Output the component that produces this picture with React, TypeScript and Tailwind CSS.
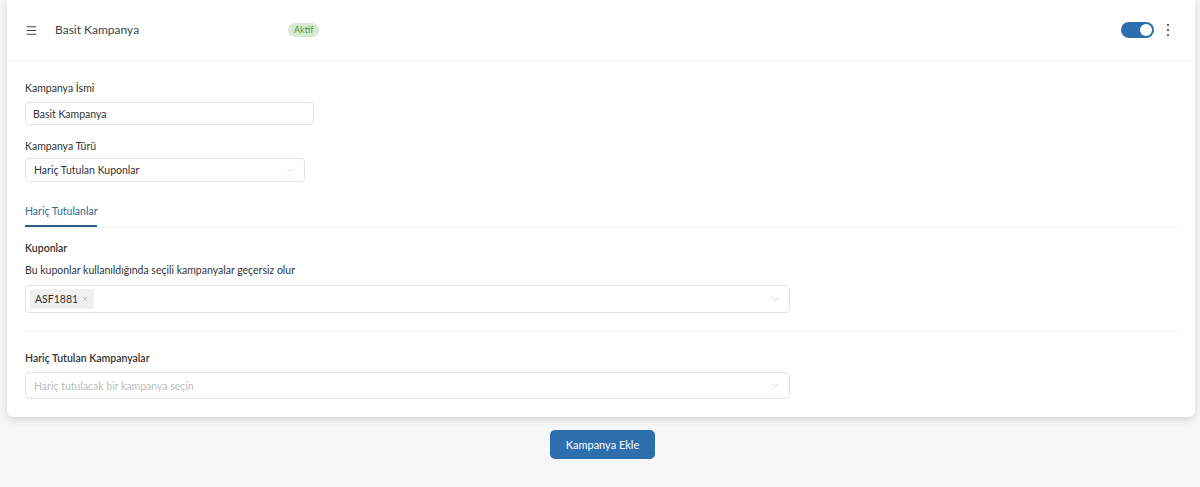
import { Menu, ChevronDown, X } from 'lucide-react';

const fieldBox =
  'flex items-center rounded-[4px] border border-[#e3e3e3] bg-white text-[10.5px]';

function Toggle() {
  return (
    <div className="flex h-[16px] w-[33px] items-center justify-end rounded-full bg-[#2c6eae] pr-[2px]">
      <div className="h-[12px] w-[12px] rounded-full bg-white" />
    </div>
  );
}

function Kebab() {
  return (
    <div className="flex flex-col items-center gap-[2.5px]">
      <span className="h-[2.5px] w-[2.5px] rounded-full bg-[#333]" />
      <span className="h-[2.5px] w-[2.5px] rounded-full bg-[#333]" />
      <span className="h-[2.5px] w-[2.5px] rounded-full bg-[#333]" />
    </div>
  );
}

export default function App() {
  return (
    <div
      className="min-h-screen bg-[#f7f7f7] pl-[7px] pr-[5px] leading-[16px] text-[#333]"
      style={{ fontFamily: 'Lato, "Noto Sans", sans-serif' }}
    >
      <div className="h-[417px] rounded-b-[6px] bg-white shadow-[0_3px_8px_rgba(0,0,0,0.14)]">
        {/* Header */}
        <div className="flex h-[61px] items-center border-b border-[#f1f1f1] pb-[1px] pl-[18px] pr-[26px] pt-[1px]">
          <Menu className="h-[13px] w-[13px] text-[#444]" strokeWidth={2} />
          <span className="ml-[17px] w-[233px] text-[12px] text-[#444]">Basit Kampanya</span>
          <span className="flex h-[14px] items-center rounded-full bg-[#d5ecd3] px-[6px] text-[9px] text-[#4f8f4a]">
            Aktif
          </span>
          <div className="ml-auto flex items-center gap-[13px]">
            <Toggle />
            <Kebab />
          </div>
        </div>

        {/* Body */}
        <div className="flex flex-col items-start px-[18px] pt-[19px] text-[10.5px]">
          <div>Kampanya İsmi</div>
          <div className={`${fieldBox} mt-[6px] h-[23px] w-[289px] px-[7px]`}>Basit Kampanya</div>

          <div className="mt-[13px]">Kampanya Türü</div>
          <div className={`${fieldBox} mt-[4px] h-[24px] w-[280px] px-[8px]`}>
            <span className="flex-1">Hariç Tutulan Kuponlar</span>
            <ChevronDown className="h-[11px] w-[11px] text-[#bbb]" strokeWidth={1.5} />
          </div>

          {/* Tabs */}
          <div className="mt-[21px] flex w-full border-b border-[#efefef]">
            <div className="border-b-2 border-[#2b5f86] pb-[6px] text-[#2d6a9a]">Hariç Tutulanlar</div>
          </div>

          <div className="mt-[12px] font-semibold">Kuponlar</div>
          <div className="mt-[6px]">Bu kuponlar kullanıldığında seçili kampanyalar geçersiz olur</div>
          <div className={`${fieldBox} mt-[7px] h-[28px] w-[765px] pl-[4px] pr-[8px]`}>
            <div className="flex flex-1 items-center">
              <span className="flex items-center gap-[3px] rounded-[3px] bg-[#f0f0f0] px-[5px] py-[2px]">
                ASF1881
                <X className="h-[8px] w-[8px] text-[#aaa]" strokeWidth={2} />
              </span>
            </div>
            <ChevronDown className="h-[11px] w-[11px] text-[#bbb]" strokeWidth={1.5} />
          </div>

          <div className="mt-[18px] w-full border-t border-[#efefef]" />

          <div className="mt-[18px] font-semibold">Hariç Tutulan Kampanyalar</div>
          <div className={`${fieldBox} mt-[6px] h-[27px] w-[765px] px-[8px]`}>
            <span className="flex-1 text-[#bdbdbd]">Hariç tutulacak bir kampanya seçin</span>
            <ChevronDown className="h-[11px] w-[11px] text-[#bbb]" strokeWidth={1.5} />
          </div>
        </div>
      </div>

      <div className="flex justify-center pt-[13px]">
        <button className="ml-[3px] h-[29px] w-[105px] rounded-[5px] bg-[#2c6eae] text-[11px] text-white">
          Kampanya Ekle
        </button>
      </div>
    </div>
  );
}
